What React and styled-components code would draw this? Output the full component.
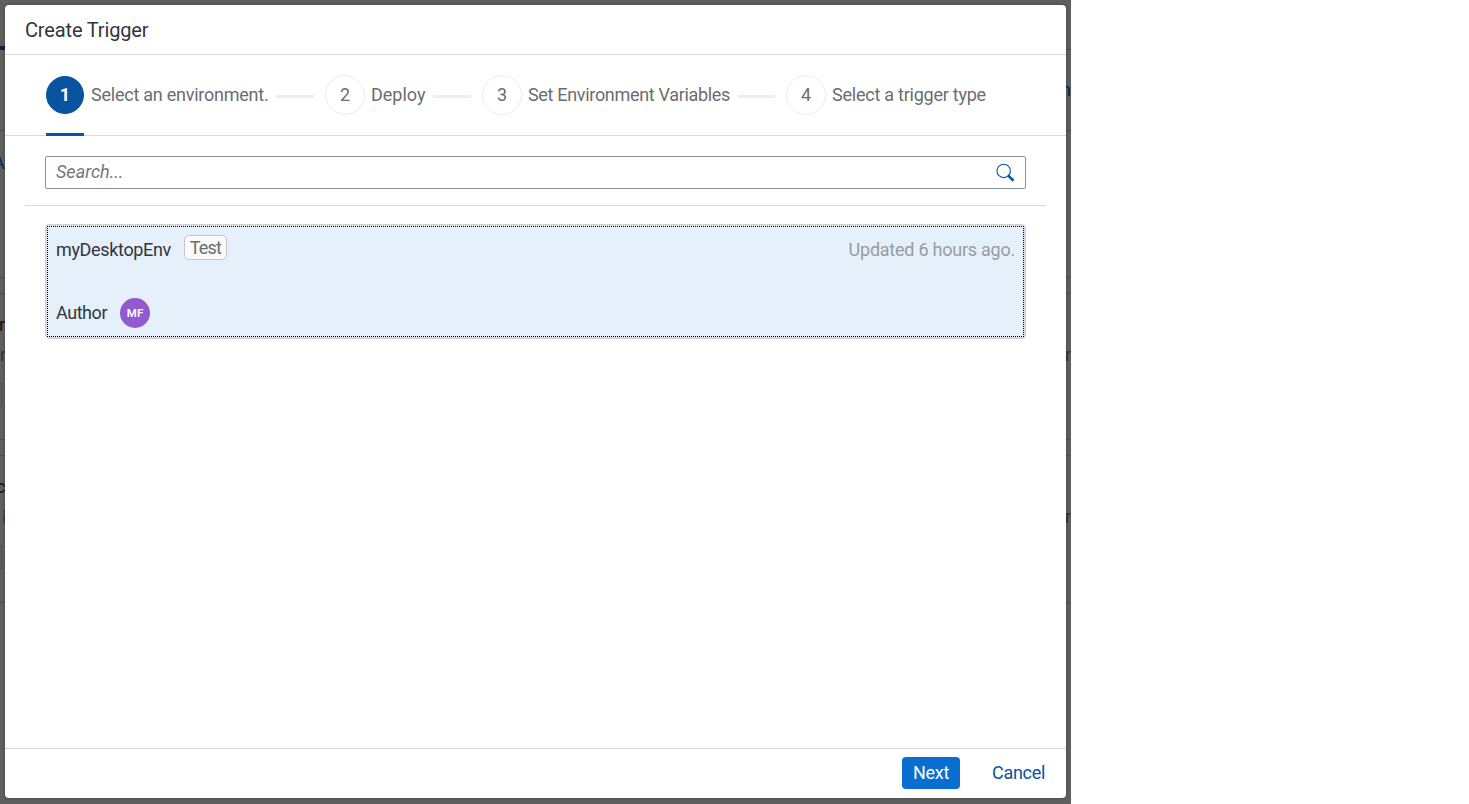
import styled, { createGlobalStyle } from 'styled-components'
import { Fragment, useState } from 'react'

const steps = [
  { title: 'Select an environment.', width: 177, line: 38, spacing: -0.24 },
  { title: 'Deploy', width: 54, line: 38, spacing: 0 },
  { title: 'Set Environment Variables', width: 202, line: 37, spacing: -0.32 },
  { title: 'Select a trigger type', width: 155, spacing: -0.24 },
]

const App = () => {
  const [query, setQuery] = useState('')

  return (
    <Stage>
      <GlobalStyle />
      <Page>
        <TabBar>
          <ActiveTab />
          <TabLink>n</TabLink>
        </TabBar>
        <Intro>A</Intro>
        <Card>
          <CardTitle $offset={-1}>r</CardTitle>
          <CardMeta><span>r</span><span>r</span></CardMeta>
          <CardTag />
        </Card>
        <Card>
          <CardTitle $offset={-4}>c</CardTitle>
          <CardMeta $brown><span>i</span><span>r</span></CardMeta>
          <CardTag />
        </Card>
      </Page>
      <Overlay>
        <Dialog>
          <Header><Text $spacing={-0.15}>Create Trigger</Text></Header>
          <Steps>
            {steps.map((step, index) => (
              <Fragment key={step.title}>
                <Step $active={index === 0}>
                  <Circle $active={index === 0}>{index + 1}</Circle>
                  <StepTitle $width={step.width} $spacing={step.spacing}>{step.title}</StepTitle>
                </Step>
                {step.line && <StepLine $width={step.line} />}
              </Fragment>
            ))}
          </Steps>
          <SearchBar>
            <SearchBox>
              <SearchInput placeholder="Search..." value={query} onChange={(e) => setQuery(e.target.value)} />
              <SearchIcon />
            </SearchBox>
          </SearchBar>
          <List>
            <Environment>
              <EnvironmentBody>
                <Row $top>
                  <Text $spacing={-0.34}>myDesktopEnv</Text>
                  <Tag>Test</Tag>
                  <Updated>Updated 6 hours ago.</Updated>
                </Row>
                <Row>
                  <Text $spacing={-0.45}>Author</Text>
                  <Avatar>MF</Avatar>
                </Row>
              </EnvironmentBody>
            </Environment>
          </List>
          <Footer>
            <Button $primary>Next</Button>
            <Button>Cancel</Button>
          </Footer>
        </Dialog>
      </Overlay>
    </Stage>
  )
}

const SearchIcon = () => (
  <svg width="20" height="20" viewBox="0 0 20 20" fill="none" stroke="#0854a0">
    <circle cx="8.7" cy="7.9" r="6.7" strokeWidth="1.1" />
    <path d="M13 12.4L18.5 17.7" strokeWidth="2.6" />
  </svg>
)

const GlobalStyle = createGlobalStyle`
  * {
    box-sizing: border-box;
  }
  body {
    margin: 0;
    background: #fff;
    overflow: hidden;
    font-family: Roboto, "Liberation Sans", sans-serif;
    font-size: 18px;
    line-height: 22px;
    color: #32363a;
  }
`

const Stage = styled.div`
  position: relative;
  width: 1071px;
  height: 804px;
  overflow: hidden;
  background: #5f5f5f;
`

const Page = styled.div`
  display: flex;
  flex-direction: column;
  height: 100%;
`

const TabBar = styled.div`
  display: flex;
  justify-content: space-between;
  height: 131px;
  border-bottom: 1px solid #4d4d4d;
`

const ActiveTab = styled.div`
  width: 5px;
  height: 4px;
  margin-top: 46px;
  background: #03274b;
`

const TabLink = styled.div`
  margin-top: 49px;
  padding-top: 29px;
  border-top: 1px solid #4d4d4d;
  color: #03274b;
`

const Intro = styled.div`
  height: 147px;
  padding-top: 21px;
  margin-left: -7px;
  color: #03274b;
  border-bottom: 1px solid #4d4d4d;
`

const Card = styled.div`
  height: 147px;
  margin-top: 15px;
  border-top: 1px solid #4d4d4d;
  border-bottom: 1px solid #4d4d4d;

  & + & {
    height: 148px;
  }
`

const CardTitle = styled.div`
  height: 22px;
  margin: 20px 0 8px ${(props) => props.$offset}px;
  color: #111;
`

const CardMeta = styled.div`
  display: flex;
  justify-content: space-between;
  height: 22px;
  color: #2c333c;

  span:first-child {
    margin-left: ${(props) => (props.$brown ? 2 : 0)}px;
    color: ${(props) => (props.$brown ? '#4a3a30' : '#2c333c')};
  }
`

const CardTag = styled.div`
  width: 2px;
  height: 24px;
  margin-top: 17px;
  border: 1px solid #4d4d4d;
  border-left: 0;
  border-radius: 0 4px 4px 0;
`

const Overlay = styled.div`
  position: absolute;
  inset: 0;
  display: flex;
  padding: 5px 5px 6px;
`

const Dialog = styled.div`
  display: flex;
  flex: 1;
  flex-direction: column;
  background: #fff;
  border-radius: 4px;
  box-shadow: 0 0 3px rgba(0, 0, 0, 0.35);
`

const Header = styled.div`
  display: flex;
  align-items: center;
  height: 50px;
  padding: 0 20px;
  font-size: 20px;
  border-bottom: 1px solid #d9d9d9;
`

const Text = styled.span`
  letter-spacing: ${(props) => props.$spacing}px;
  white-space: nowrap;
`

const Steps = styled.div`
  display: flex;
  height: 81px;
  padding-left: 40px;
  border-bottom: 1px solid #d9d9d9;
`

const Step = styled.div`
  display: flex;
  align-items: center;
  height: 81px;
  padding-bottom: 1px;
  background: ${(props) => (props.$active ? 'linear-gradient(#0854a0, #0854a0) 1px 100% / 38px 3px no-repeat' : 'none')};
`

const Circle = styled.div`
  display: flex;
  align-items: center;
  justify-content: center;
  width: ${(props) => (props.$active ? 38 : 40)}px;
  height: ${(props) => (props.$active ? 38 : 40)}px;
  margin: ${(props) => (props.$active ? '0 7px 0 1px' : '0 6px 0 0')};
  border: 1px solid ${(props) => (props.$active ? '#0854a0' : '#ededed')};
  border-radius: 50%;
  background: ${(props) => (props.$active ? '#0854a0' : '#fff')};
  color: ${(props) => (props.$active ? '#fff' : '#6a6d70')};
  font-weight: ${(props) => (props.$active ? 700 : 400)};
`

const StepTitle = styled.span`
  width: ${(props) => props.$width}px;
  color: #6a6d70;
  letter-spacing: ${(props) => props.$spacing}px;
  white-space: nowrap;
`

const StepLine = styled.div`
  width: ${(props) => props.$width}px;
  height: 3px;
  margin: 40px 11px 0 8px;
  background: #ededed;
`

const SearchBar = styled.div`
  height: 70px;
  margin: 0 20px;
  padding: 20px 20px 0;
  border-bottom: 1px solid #d9d9d9;
`

const SearchBox = styled.div`
  display: flex;
  align-items: center;
  height: 33px;
  padding: 0 10px;
  border: 1px solid #89919a;
  border-radius: 2px;
`

const SearchInput = styled.input`
  flex: 1;
  padding: 0 0 2px;
  border: 0;
  outline: 0;
  background: none;
  font: inherit;
  color: #32363a;

  &::placeholder {
    color: #74777a;
    font-style: italic;
    opacity: 1;
  }
`

const List = styled.div`
  flex: 1;
  padding: 18px 40px 0;
`

const Environment = styled.div`
  height: 115px;
  padding: 1px;
  border: 1px solid #d0d3d6;
  border-radius: 4px;
  background: #d3dbe2;
`

const EnvironmentBody = styled.div`
  display: flex;
  flex-direction: column;
  justify-content: space-between;
  height: 111px;
  padding: 7px 8px 8px;
  border: 1px dotted #000;
  background: #e5f0fa;
`

const Row = styled.div`
  display: flex;
  align-items: center;
  height: 30px;
  padding-top: ${(props) => (props.$top ? 2 : 0)}px;
`

const Tag = styled.span`
  width: 43px;
  height: 25px;
  margin: -6px 0 0 13px;
  border: 1px solid #c4c6c8;
  border-radius: 5px;
  background: #fafafa;
  color: #6a6d70;
  letter-spacing: -0.8px;
  line-height: 24px;
  text-align: center;
`

const Updated = styled.span`
  margin-left: auto;
  color: #999c9f;
  letter-spacing: -0.24px;
`

const Avatar = styled.div`
  width: 30px;
  height: 30px;
  margin-left: 13px;
  border-radius: 50%;
  background: #925ace;
  color: #fff;
  font-size: 11.5px;
  font-weight: 600;
  line-height: 31px;
  text-align: center;
`

const Footer = styled.div`
  display: flex;
  align-items: flex-start;
  justify-content: flex-end;
  height: 50px;
  gap: 21px;
  padding: 8px 10px 0 0;
  border-top: 1px solid #d9d9d9;
`

const Button = styled.button`
  width: ${(props) => (props.$primary ? 58 : 75)}px;
  height: 32px;
  padding: 0;
  border: 0;
  border-radius: 4px;
  background: ${(props) => (props.$primary ? '#0a6ed1' : 'transparent')};
  color: ${(props) => (props.$primary ? '#fff' : '#0854a0')};
  font: inherit;
  letter-spacing: -0.3px;
  cursor: pointer;
`

export default App
